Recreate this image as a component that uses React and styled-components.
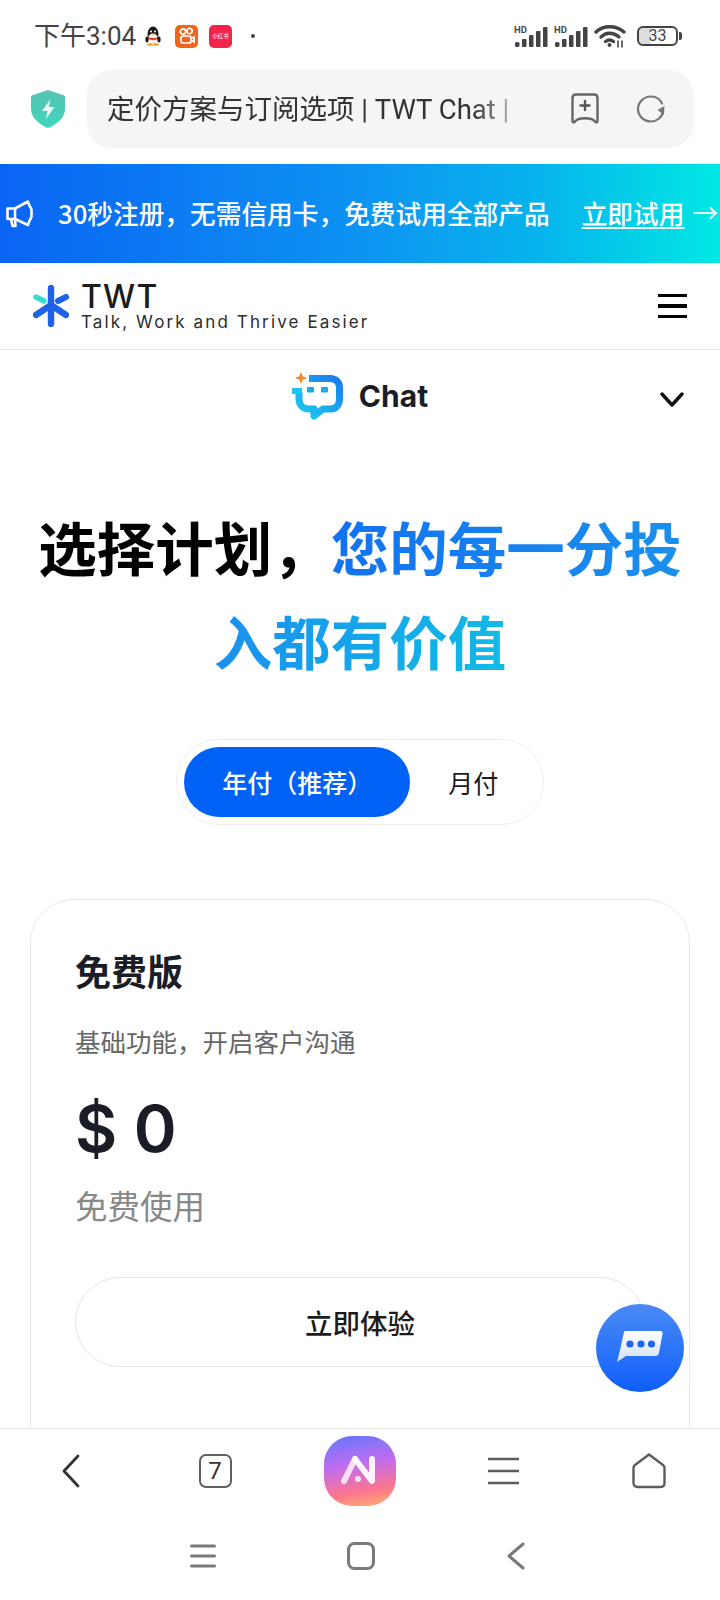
import styled, { createGlobalStyle } from 'styled-components';

const GlobalStyle = createGlobalStyle`
	html, body {
		margin: 0;
		padding: 0;
		background: #fff;
	}
	* {
		box-sizing: border-box;
	}
`;

const CJK = `"Noto Sans CJK SC", sans-serif`;
const LATIN = `Inter, "Noto Sans CJK SC", sans-serif`;
const SYSTEM = `Roboto, "Noto Sans CJK SC", sans-serif`;

const Page = styled.div`
	position: relative;
	width: 720px;
	height: 1600px;
	overflow: hidden;
	display: flex;
	flex-direction: column;
	font-family: ${CJK};
	background: #fff;
`;

const StatusBar = styled.div`
	height: 70px;
	flex: none;
	display: flex;
	align-items: center;
	padding: 2px 38px 0 34px;
	font-family: ${SYSTEM};
`;

const Time = styled.div`
	font-size: 26px;
	color: #444;
	line-height: 1;
	width: 111px;
	white-space: nowrap;
`;

const NoticeIcons = styled.div`
	display: flex;
	align-items: center;
	gap: 11px;
	flex: 1;
`;

const AppBadge = styled.div`
	width: 23px;
	height: 23px;
	border-radius: 5px;
	margin-left: ${(p) => p.$offset || 0}px;
	background: ${(p) => p.$bg};
	display: flex;
	align-items: center;
	justify-content: center;
	color: #fff;
	font-size: 5.5px;
	white-space: nowrap;
	overflow: hidden;
`;

const Dot = styled.div`
	width: 4px;
	height: 4px;
	border-radius: 50%;
	background: #444;
	margin-left: 8px;
`;

const SystemIcons = styled.div`
	display: flex;
	align-items: center;
	gap: 5px;
`;

const Battery = styled.div`
	position: relative;
	width: 41px;
	height: 20px;
	border: 2px solid #444;
	border-radius: 6px;
	margin-left: 6px;
	margin-right: 4px;
	font-size: 16px;
	line-height: 16px;
	color: #444;
	text-align: center;
	background: linear-gradient(90deg, #ddd 33%, #fff 33%);

	&::after {
		content: '';
		position: absolute;
		right: -6px;
		top: 4px;
		width: 3px;
		height: 8px;
		border-radius: 0 2px 2px 0;
		background: #444;
	}
`;

const AddressRow = styled.div`
	height: 94px;
	flex: none;
	display: flex;
	align-items: flex-start;
	padding-right: 28px;
`;

const ShieldSlot = styled.div`
	width: 87px;
	height: 77px;
	flex: none;
	display: flex;
	align-items: center;
	justify-content: center;
	padding-left: 9px;
`;

const AddressPill = styled.div`
	flex: 1;
	height: 77px;
	border-radius: 24px;
	background: #f5f5f5;
	display: flex;
	align-items: center;
	padding: 0 27px 0 20px;
	box-shadow: 0 1px 3px rgba(0, 0, 0, 0.04);
`;

const AddressText = styled.div`
	width: 416px;
	flex: none;
	overflow: hidden;
	white-space: nowrap;
	font-family: ${SYSTEM};
	font-size: 27.5px;
	color: #333;
	padding-bottom: 3px;
	-webkit-mask-image: linear-gradient(90deg, #000 88%, rgba(0, 0, 0, 0.35) 97%);
	mask-image: linear-gradient(90deg, #000 88%, rgba(0, 0, 0, 0.35) 97%);
`;

const AddressActions = styled.div`
	display: flex;
	align-items: center;
	gap: 37px;
	margin-left: 48px;
`;

const Banner = styled.div`
	height: 99px;
	flex: none;
	display: flex;
	align-items: center;
	padding-left: 6px;
	color: #fff;
	font-size: 25.7px;
	font-weight: 500;
	line-height: 36px;
	white-space: nowrap;
	background: linear-gradient(90deg, #0a64f4 0%, #0d93f2 50%, #07b4ec 75%, #00e8e4 100%);
`;

const BannerText = styled.span`
	margin-left: 25px;
	padding-bottom: 2px;
`;

const BannerLink = styled.span`
	margin-left: 32px;
	padding-bottom: 2px;
	text-decoration: underline;
	text-underline-offset: 3px;
	text-decoration-thickness: 2px;
`;

const BannerArrow = styled.span`
	margin-left: 8px;
	padding-bottom: 4px;
	font-weight: 400;
`;

const SiteHeader = styled.header`
	height: 87px;
	flex: none;
	display: flex;
	align-items: center;
	justify-content: space-between;
	padding: 0 33px;
	border-bottom: 1px solid #e8e8e8;
`;

const Brand = styled.div`
	display: flex;
	align-items: center;
	gap: 12px;
`;

const BrandName = styled.div`
	font-family: ${LATIN};
	font-size: 32px;
	line-height: 33px;
	font-weight: 500;
	letter-spacing: 1.2px;
	color: #1c1c1c;
`;

const BrandTag = styled.div`
	font-family: ${LATIN};
	font-size: 17px;
	line-height: 19px;
	letter-spacing: 2.12px;
	color: #2c2c2c;
	white-space: nowrap;
`;

const Burger = styled.div`
	width: 29px;
	display: flex;
	flex-direction: column;
	gap: 7px;

	span {
		display: block;
		height: 3.5px;
		background: #000;
	}
`;

const ProductRow = styled.div`
	position: relative;
	height: 92px;
	flex: none;
	display: flex;
	align-items: center;
	justify-content: center;
	gap: 17px;
	padding-right: 2px;
`;

const ProductIcon = styled.div`
	display: flex;
	margin: 4px -2px 0 2px;
`;

const ProductName = styled.div`
	font-family: ${LATIN};
	font-size: 30px;
	font-weight: 700;
	color: #1a1d26;
`;

const ProductChevron = styled.div`
	position: absolute;
	right: 36px;
	top: 42px;
	display: flex;
`;

const Main = styled.main`
	flex: 1;
	min-height: 0;
	overflow: hidden;
	padding: 0 30px;
`;

const Heading = styled.h1`
	margin: 57px -20px 0;
	font-size: 58.5px;
	line-height: 94px;
	font-weight: 700;
	text-align: center;
	color: #000;
`;

const HeadingAccent = styled.span`
	background: linear-gradient(90deg, #1272f2 0%, #1a90ee 55%, #10bbe6 100%);
	-webkit-background-clip: text;
	background-clip: text;
	color: transparent;
`;

const Toggle = styled.div`
	width: 368px;
	height: 86px;
	margin: 52px auto 0;
	padding: 7px;
	display: flex;
	align-items: center;
	border: 1px solid #eee;
	border-radius: 43px;
`;

const ToggleOption = styled.div`
	height: 70px;
	width: ${(p) => (p.$active ? '227px' : '126px')};
	border-radius: 35px;
	display: flex;
	align-items: center;
	justify-content: center;
	font-size: 25px;
	font-weight: ${(p) => (p.$active ? 500 : 400)};
	background: ${(p) => (p.$active ? '#0061f7' : 'transparent')};
	color: ${(p) => (p.$active ? '#fff' : '#1a1a1a')};
`;

const PlanCard = styled.section`
	margin-top: 74px;
	height: 700px;
	border: 1px solid #e9e9e9;
	border-radius: 44px;
	padding: 45px 44px;
`;

const PlanTitle = styled.h2`
	margin: 0;
	font-size: 36px;
	line-height: 50px;
	font-weight: 700;
	color: #1a1d26;
`;

const PlanDesc = styled.p`
	margin: 28px 0 0;
	font-size: 25.5px;
	line-height: 36px;
	color: #666;
`;

const Price = styled.div`
	margin-top: 25px;
	font-family: ${LATIN};
	font-size: 65px;
	line-height: 90px;
	font-weight: 600;
	color: #1a1d26;
`;

const PriceNote = styled.div`
	margin-top: 9px;
	font-size: 32.5px;
	line-height: 44px;
	color: #888;
`;

const TryButton = styled.div`
	margin-top: 50px;
	height: 90px;
	border: 1px solid #e6e6e6;
	border-radius: 45px;
	display: flex;
	align-items: center;
	justify-content: center;
	font-size: 27.5px;
	font-weight: 500;
	color: #1c1c1c;
`;

const ChatFab = styled.div`
	position: absolute;
	left: 596px;
	top: 1304px;
	width: 88px;
	height: 88px;
	border-radius: 50%;
	background: linear-gradient(180deg, #4b8af5 0%, #0f5ffa 100%);
	display: flex;
	align-items: center;
	justify-content: center;
`;

const BrowserNav = styled.nav`
	height: 101px;
	flex: none;
	display: grid;
	grid-template-columns: 141px 148px 141px 147px 143px;
	align-items: center;
	justify-items: center;
	background: #fff;
	position: relative;
	box-shadow: 0 -1px 0 #e4e4e4;
	padding-bottom: 18px;
`;

const TabCount = styled.div`
	width: 33px;
	height: 34px;
	border: 2.5px solid #606060;
	border-radius: 7px;
	display: flex;
	align-items: center;
	justify-content: center;
	font-size: 24px;
	font-family: ${SYSTEM};
	color: #333;
`;

const AppLogo = styled.div`
	width: 72px;
	height: 70px;
	border-radius: 28px;
	background: linear-gradient(170deg, #5f78fb 0%, #c06cf0 40%, #fb7590 75%, #fdb36b 100%);
	display: flex;
	align-items: center;
	justify-content: center;
`;

const SystemNav = styled.div`
	height: 70px;
	flex: none;
	display: flex;
	align-items: center;
	justify-content: center;
	gap: 131px;
	background: #fff;
	padding: 0 5px 18px 0;
`;

function Penguin() {
	return (
		<svg width="16" height="20" viewBox="0 0 16 20">
			<ellipse cx="8" cy="8" rx="5.5" ry="7.5" fill="#1a1a1a" />
			<ellipse cx="8" cy="13" rx="5" ry="5.5" fill="#f4f0e8" />
			<path d="M2.5 10.5 C5 12.5 11 12.5 13.5 10.5 L13 13 C10 14.5 6 14.5 3 13 Z" fill="#e23b2c" />
			<ellipse cx="2" cy="13.5" rx="1.6" ry="3" fill="#1a1a1a" />
			<ellipse cx="14" cy="13.5" rx="1.6" ry="3" fill="#1a1a1a" />
			<ellipse cx="5" cy="18.5" rx="3" ry="1.3" fill="#f0a020" />
			<ellipse cx="11" cy="18.5" rx="3" ry="1.3" fill="#f0a020" />
			<circle cx="6" cy="5.5" r="1" fill="#fff" />
			<circle cx="10" cy="5.5" r="1" fill="#fff" />
			<path d="M6 7.6 H10 L8 9 Z" fill="#f0a020" />
		</svg>
	);
}

function KuaishouIcon() {
	return (
		<svg width="17" height="18" viewBox="0 0 17 18" fill="none" stroke="#fff" strokeWidth="1.7">
			<circle cx="5" cy="4.5" r="2.7" />
			<circle cx="11.5" cy="4" r="2.7" />
			<rect x="3" y="9" width="10" height="7" rx="2" />
			<path d="M13.5 11.5 L16 10 V15 L13.5 13.5" />
		</svg>
	);
}

function Signal() {
	return (
		<svg width="35" height="24" viewBox="0 0 35 24">
			<text x="0" y="8.5" fontSize="9.5" fontWeight="700" fontFamily="Roboto, sans-serif" fill="#444">HD</text>
			<rect x="1" y="18" width="4.5" height="5" rx="1.5" fill="#444" />
			<rect x="8" y="15" width="4.5" height="8" rx="1" fill="#444" />
			<rect x="15" y="11" width="4.5" height="12" rx="1" fill="#444" />
			<rect x="22" y="7" width="4.5" height="16" rx="1" fill="#444" />
			<rect x="29" y="3" width="4.5" height="20" rx="1" fill="#444" />
		</svg>
	);
}

function Wifi() {
	return (
		<svg width="32" height="24" viewBox="0 0 32 24" fill="none" stroke="#444" strokeWidth="3.4" strokeLinecap="round">
			<path d="M2 8 C9 1 22 1 30 8" />
			<path d="M7 13 C12 8 19 8 25 13" />
			<path d="M11.5 17.5 C14 15.5 17 15.5 19.5 17.5" />
			<circle cx="15.5" cy="21" r="2" fill="#444" stroke="none" />
			<path d="M24 17 V23 M28 17 V23" strokeWidth="1.6" />
		</svg>
	);
}

function Shield() {
	return (
		<svg width="34" height="38" viewBox="0 0 34 38">
			<defs>
				<linearGradient id="shieldFill" x1="0" y1="0" x2="0" y2="1">
					<stop offset="0" stopColor="#55c3b2" />
					<stop offset="1" stopColor="#3fd6bd" />
				</linearGradient>
			</defs>
			<path d="M17 0 L33 5.5 C34 6 34 7 34 8 V19 C34 28 25 35 17 38 C9 35 0 28 0 19 V8 C0 7 0 6 1 5.5 Z" fill="url(#shieldFill)" />
			<path d="M19.5 9 L11 21 H16.5 L15 29 L23.5 17 H18 Z" fill="#e8faf6" />
		</svg>
	);
}

function BookmarkAdd() {
	return (
		<svg width="28" height="31" viewBox="0 0 28 31" fill="none" stroke="#666" strokeWidth="2.4" strokeLinejoin="round" strokeLinecap="round">
			<path d="M5 1.5 H23 C25 1.5 26.5 3 26.5 5 V28 C26.5 29.5 25.5 29.7 24.5 29 C21 24 7 24 3.5 29 C2.5 29.7 1.5 29.5 1.5 28 V5 C1.5 3 3 1.5 5 1.5 Z" />
			<path d="M14 8 V17 M9.5 12.5 H18.5" stroke="#555" />
		</svg>
	);
}

function Refresh() {
	return (
		<svg width="30" height="28" viewBox="0 0 30 28" fill="none">
			<path d="M27 17 C25.5 23 20.5 26.5 15 26.5 C8 26.5 2 21 2 14 C2 7 8 1.5 15 1.5 C20 1.5 24 4 26 8.5" stroke="#777" strokeWidth="2.2" strokeLinecap="round" />
			<path d="M28.5 11 L28 20 L21.5 15 Z" fill="#777" />
		</svg>
	);
}

function Megaphone() {
	return (
		<svg width="27" height="28" viewBox="0 0 27 28" fill="none" stroke="#fff" strokeWidth="2.6" strokeLinejoin="round">
			<path d="M1.5 8.5 H9 L22 1.5 C23 6 24.5 7 25.5 9.5 V17 C24.5 19 23 21 22 25 L9 19 H1.5 Z" />
			<path d="M9 8.5 V19" />
			<path d="M5 19 L6.5 26 H9.5 L9 19" />
		</svg>
	);
}

function BrandMark() {
	return (
		<svg width="36" height="42" viewBox="0 0 36 42" fill="none" strokeLinecap="round" strokeLinejoin="round">
			<path d="M18 3 V18" stroke="#1f62e8" strokeWidth="6.4" />
			<path d="M18 24 V39" stroke="#1f62e8" strokeWidth="6.4" />
			<path d="M3 12 L11 16" stroke="#38dcd0" strokeWidth="5.4" />
			<path d="M25 16 L33 12" stroke="#1f62e8" strokeWidth="6" />
			<path d="M3 30 L18 20 L33 30" stroke="#1f62e8" strokeWidth="6.4" />
		</svg>
	);
}

function ChatMark() {
	return (
		<svg width="52" height="52" viewBox="0 0 52 52" fill="none">
			<defs>
				<linearGradient id="chatStroke" x1="0.9" y1="0" x2="0.1" y2="1">
					<stop offset="0" stopColor="#1b80ee" />
					<stop offset="1" stopColor="#1cc8f0" />
				</linearGradient>
			</defs>
			<path d="M17 6.5 H38 C44 6.5 47.5 10 47.5 16 V27 C47.5 33 44 37 38 37 H31 L22 44 V37 H17 C11 37 7 33 7 27 V20" stroke="url(#chatStroke)" strokeWidth="7" strokeLinejoin="round" />
			<path d="M0 19 H10" stroke="#1cc4ee" strokeWidth="6" />
			<rect x="15" y="15" width="7" height="5.5" rx="1" fill="#1ca8ee" />
			<rect x="29" y="15" width="7" height="5.5" rx="1" fill="#1ca8ee" />
			<path d="M9 1 C9.5 4 11 5.5 14 6 C11 6.5 9.5 8 9 11 C8.5 8 7 6.5 4 6 C7 5.5 8.5 4 9 1 Z" fill="#f58a2a" stroke="#f58a2a" />
		</svg>
	);
}

function Chevron({ width, height, color, weight, d }) {
	return (
		<svg width={width} height={height} viewBox={`0 0 ${width} ${height}`} fill="none" stroke={color} strokeWidth={weight} strokeLinecap="round" strokeLinejoin="round">
			<path d={d} />
		</svg>
	);
}

function FabBubble() {
	return (
		<svg width="48" height="36" viewBox="0 0 48 36">
			<defs>
				<linearGradient id="bubbleFill" x1="0" y1="0" x2="0" y2="1">
					<stop offset="0" stopColor="#fff" />
					<stop offset="1" stopColor="#cfe0fb" />
				</linearGradient>
			</defs>
			<path d="M8 2 C8.5 1 9 1 10 1 H44 C46 1 47 2 46.5 4 L43 23 C42.5 25 41.5 26 39.5 26 H10 L1 32 L4 20 Z" fill="url(#bubbleFill)" />
			<circle cx="14" cy="14" r="3.6" fill="#1f66ee" />
			<circle cx="25" cy="14" r="3.6" fill="#1f66ee" />
			<circle cx="35.5" cy="14" r="3.6" fill="#1f66ee" />
		</svg>
	);
}

function AppMark() {
	return (
		<svg width="40" height="32" viewBox="0 0 40 32" fill="none" strokeLinecap="round" strokeLinejoin="round">
			<path d="M4 26 L15 4" stroke="#f7dff2" strokeWidth="6" />
			<circle cx="18" cy="24" r="3" fill="#f7dff2" />
			<path d="M15 4 L32 26 V4" stroke="#fff" strokeWidth="6" opacity="0.92" />
		</svg>
	);
}

function MenuLines() {
	return (
		<svg width="31" height="28" viewBox="0 0 31 28" stroke="#5c5c5c" strokeWidth="2.4">
			<path d="M0 2 H31 M0 14 H31 M0 26 H31" />
		</svg>
	);
}

function HomeIcon() {
	return (
		<svg width="34" height="36" viewBox="0 0 34 36" fill="none" stroke="#5c5c5c" strokeWidth="2.4" strokeLinejoin="round">
			<path d="M17 1.5 L31 12 C32 12.7 32.5 13.5 32.5 15 V30 C32.5 32.5 31 34 28.5 34 H5.5 C3 34 1.5 32.5 1.5 30 V15 C1.5 13.5 2 12.7 3 12 Z" />
		</svg>
	);
}

function SystemMenu() {
	return (
		<svg width="26" height="24" viewBox="0 0 26 24" stroke="#7a7a7a" strokeWidth="3" strokeLinecap="round">
			<path d="M1.5 2 H24.5 M1.5 12 H24.5 M1.5 22 H24.5" />
		</svg>
	);
}

function SystemHome() {
	return (
		<svg width="28" height="28" viewBox="0 0 28 28" fill="none" stroke="#7a7a7a" strokeWidth="3">
			<rect x="1.5" y="1.5" width="25" height="25" rx="6" />
		</svg>
	);
}

function App() {
	return (
		<Page>
			<GlobalStyle />

			<StatusBar>
				<Time>下午3:04</Time>
				<NoticeIcons>
					<Penguin />
					<AppBadge $bg="#f0641e" $offset={3}><KuaishouIcon /></AppBadge>
					<AppBadge $bg="#f3244a">小红书</AppBadge>
					<Dot />
				</NoticeIcons>
				<SystemIcons>
					<Signal />
					<Signal />
					<Wifi />
					<Battery>33</Battery>
				</SystemIcons>
			</StatusBar>

			<AddressRow>
				<ShieldSlot><Shield /></ShieldSlot>
				<AddressPill>
					<AddressText>定价方案与订阅选项 | TWT Chat |</AddressText>
					<AddressActions>
						<BookmarkAdd />
						<Refresh />
					</AddressActions>
				</AddressPill>
			</AddressRow>

			<Banner>
				<Megaphone />
				<BannerText>30秒注册，无需信用卡，免费试用全部产品</BannerText>
				<BannerLink>立即试用</BannerLink>
				<BannerArrow>→</BannerArrow>
			</Banner>

			<SiteHeader>
				<Brand>
					<BrandMark />
					<div>
						<BrandName>TWT</BrandName>
						<BrandTag>Talk, Work and Thrive Easier</BrandTag>
					</div>
				</Brand>
				<Burger>
					<span />
					<span />
					<span />
				</Burger>
			</SiteHeader>

			<ProductRow>
				<ProductIcon><ChatMark /></ProductIcon>
				<ProductName>Chat</ProductName>
				<ProductChevron>
					<Chevron width={24} height={16} color="#111" weight={3.4} d="M2 2 L12 13 L22 2" />
				</ProductChevron>
			</ProductRow>

			<Main>
				<Heading>
					选择计划，<HeadingAccent>您的每一分投入都有价值</HeadingAccent>
				</Heading>

				<Toggle>
					<ToggleOption $active>年付（推荐）</ToggleOption>
					<ToggleOption>月付</ToggleOption>
				</Toggle>

				<PlanCard>
					<PlanTitle>免费版</PlanTitle>
					<PlanDesc>基础功能，开启客户沟通</PlanDesc>
					<Price>$ 0</Price>
					<PriceNote>免费使用</PriceNote>
					<TryButton>立即体验</TryButton>
				</PlanCard>
			</Main>

			<BrowserNav>
				<Chevron width={20} height={34} color="#333" weight={2.8} d="M17 2 L3 17 L17 32" />
				<TabCount>7</TabCount>
				<AppLogo><AppMark /></AppLogo>
				<MenuLines />
				<HomeIcon />
			</BrowserNav>

			<SystemNav>
				<SystemMenu />
				<SystemHome />
				<Chevron width={20} height={28} color="#7a7a7a" weight={3} d="M17 2 L3 14 L17 26" />
			</SystemNav>

			<ChatFab><FabBubble /></ChatFab>
		</Page>
	);
}

export default App;
